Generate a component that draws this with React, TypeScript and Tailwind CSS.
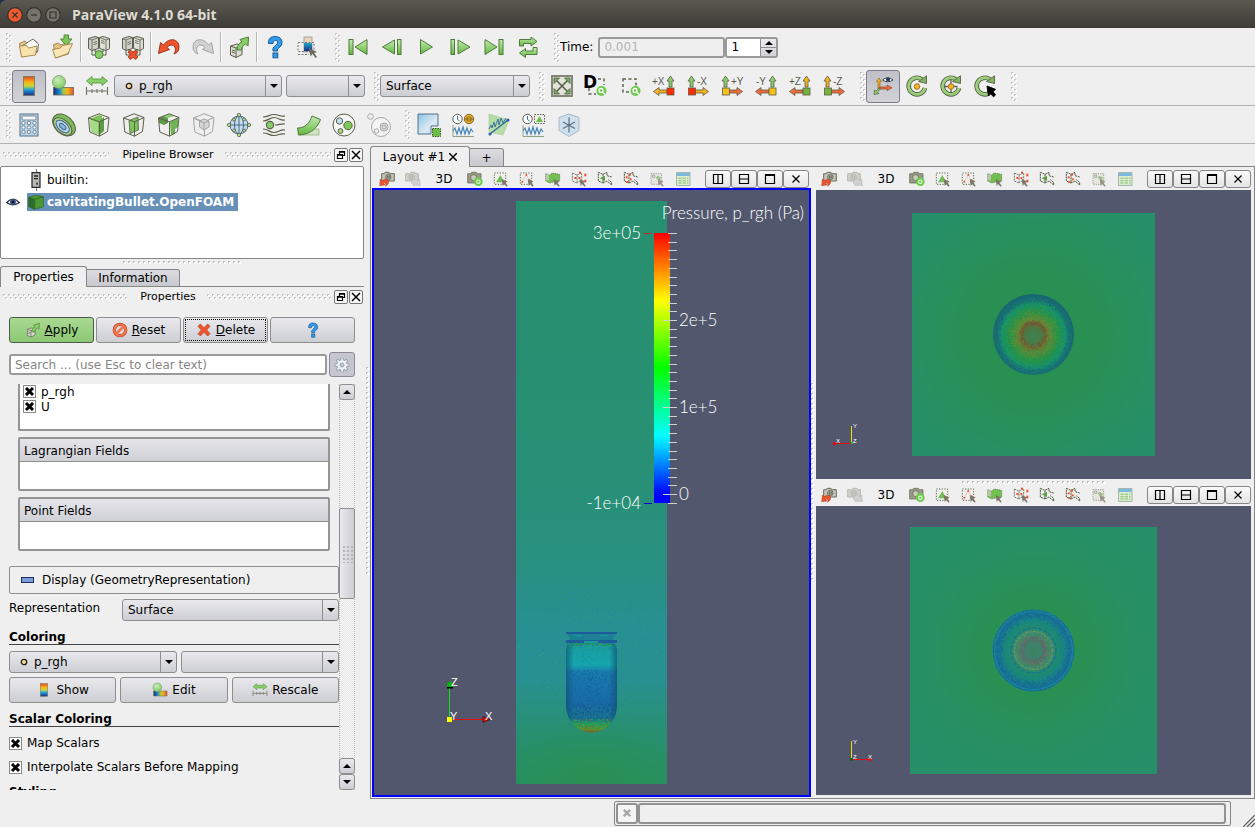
import { ReactNode, useState } from "react";
import clsx from "clsx";

type Dot = { x: number; y: number; fill: string };

const OUT = "#5c5e48";
const GRN = "#86cf6a";
const RED = "#f0522c";
const GRY = "#9c9c9c";

/* ---------- icons ---------- */

const cubeWire = (
    <g fill="none" stroke={OUT} strokeWidth="1">
        <path d="M12 .8 22 4.5 20.5 18.5 12.5 23.2 2.8 19 1.5 5z" />
        <path d="M1.5 5 12.5 8.8 22 4.5M12.5 8.8V23.2" />
    </g>
);

const racks = (
    <g>
        <path d="M1.5 3.500 8 1.500l3.500 1v11L5 15.500l-3.500-2z" fill="#d0d0ca" stroke={OUT} />
        <path d="M1.500 3.500 5 5v10.500M5 5l6.500-2.500M6.500 7.500l3.500-1M6.500 9.500l3.500-1" fill="none" stroke={OUT} strokeWidth=".8" />
        <path d="M12.500 2.500 16 1.500l6.500 2v10L19 15.500l-6.500-2z" fill="#dededa" stroke={OUT} />
        <path d="M12.500 2.500 19 5v10.500M19 5l3.500-1.500M14 5.500l3.500 1M14 7.500l3.500 1" fill="none" stroke={OUT} strokeWidth=".8" />
        <path d="M5 16v4h5M19 16v4h-5M8 14v3h8v-3" fill="none" stroke={OUT} />
    </g>
);

const camUp = (x: number, fill: string) => (
    <path d={`M${x} 13V7h-2L${x + 1.5} 2 ${x + 5} 7H${x + 3}v6z`} fill={fill} stroke={OUT} strokeWidth=".8" />
);
const camLeft = (fill: string) => (
    <path d="M15 16H7v-2.500L1.500 17.500 7 21.500V19h8z" fill={fill} stroke={OUT} strokeWidth=".8" />
);
const camRight = (fill: string) => (
    <path d="M9 16h8v-2.500l5.500 4-5.500 4V19H9z" fill={fill} stroke={OUT} strokeWidth=".8" />
);
const camText = (x: number, label: string) => (
    <text x={x} y="11" fontSize="10" fontFamily="'Liberation Sans', sans-serif" fill="#5a5a50">{label}</text>
);
const square = (x: number, fill: string) => (
    <rect x={x} y="14" width="7" height="7" fill={fill} stroke={OUT} strokeWidth=".8" />
);

const rotateArc = (
    <g>
        <path d="M17 5.500A8.300 8.300 0 1 0 20 14" fill="none" stroke={OUT} strokeWidth="4.600" />
        <path d="M17 5.500A8.300 8.300 0 1 0 20 14" fill="none" stroke="#9ad07c" strokeWidth="2.800" />
        <path d="M13.500 7.500 21.500 9.500V1.800z" fill="#7cb860" stroke={OUT} strokeWidth=".9" />
    </g>
);

const wave = <path d="M1 18l2-3 2 6 2-6 2 6 2-7 2 7 2-6 2 6 2-5 2 3" fill="none" stroke="#4386b6" strokeWidth="1.200" />;
const waveAxis = <path d="M1 12v11.500h21" fill="none" stroke="#90a080" />;
const clock = (
    <g fill="#fafafa" stroke={OUT}>
        <circle cx="5.500" cy="6" r="4.700" />
        <path d="M5.500 3v3.500l2 1.500" fill="none" stroke="#3a6ea0" />
    </g>
);
const lens = (
    <g>
        <circle cx="17.500" cy="17" r="5" fill="#6cc94c" />
        <circle cx="17" cy="16.500" r="2" fill="none" stroke="#fff" strokeWidth="1.300" />
        <path d="M18.500 18l2.500 2.500" stroke="#fff" strokeWidth="1.300" />
    </g>
);

const marquee = <rect x="2" y="3" width="17" height="17" fill="none" stroke="#5b6b45" strokeDasharray="2 2" strokeWidth="1.400" />;
const cursor = <path d="M13 12l9 4-3.500 1.500L22 22l-1.500 1.500-4-4-2 3z" fill="#7b7668" />;
const bentMesh = <path d="M2 2l7 3v13l-7-3zM9 5l6-3v5l7 2M9 18l6-3 7 6v-4l-5-4" fill="none" stroke="#4d5a3d" strokeDasharray="3 1" strokeWidth="1.500" />;

const camera = (color: string) => (
    <g fill="none" stroke={color} strokeWidth="1.500">
        <path d="M4 4h4l1-2h6l1 2h7v11H4z" fill="#c4c4b8" />
        <circle cx="14" cy="9" r="4" />
        <rect x="12.500" y="7.500" width="3" height="3" />
    </g>
);

const ICONS: Record<string, ReactNode> = {
    open: (
        <g stroke="#a08048" strokeWidth=".9">
            <path d="M2.500 8.500 8 6l2 2.500L19 6l.5 2v10L5 22z" fill="#e6c98a" />
            <path d="M5 11 16 4l5.500 5-1 8z" fill="#fdfdfb" stroke={OUT} />
            <path d="M2.500 11l7-.5 2 2.500 8.500-2-1.500 9L4.500 22z" fill="#f8e2ab" />
        </g>
    ),
    save: (
        <g strokeWidth=".9">
            <path d="M2.500 9.500l5-1.500 2 2 8-3 1 3-1 9L4.500 23z" fill="#e2c384" stroke="#a08048" />
            <path d="M13 0h4.500v4h3.500l-5.700 6.500L9.500 4H13z" fill="#7cc858" stroke="#4d7a34" />
            <path d="M1.500 14.500l8-1.500 2-2.500 10-2-4.500 10L4.500 23z" fill="#fae6b4" stroke="#a08048" />
        </g>
    ),
    connect: <g>{racks}<circle cx="12" cy="19.500" r="4" fill={GRN} stroke="#4d7a34" /></g>,
    disconnect: <g>{racks}<path d="M8 16l8 7.500M16 16l-8 7.500" stroke="#a03418" strokeWidth="4" /><path d="M8.500 16.500l7 6.500M15.500 16.500l-7 6.500" stroke={RED} strokeWidth="2.400" /></g>,
    undo: <path d="M1.500 18.500 3.500 7.500l3 2.500C12 2 22 3.500 22 12c0 4-2 6-5 7 2.500-4 1.500-8.500-2-9-2.500 0-4 1-5 2.500l2.500 2z" fill={RED} stroke="#8c3018" strokeWidth=".9" />,
    redo: <path d="M22.500 18.500 20.500 7.500l-3 2.500C12 2 2 3.500 2 12c0 4 2 6 5 7-2.500-4-1.500-8.500 2-9 2.500 0 4 1 5 2.500l-2.500 2z" fill="#d2d2d2" stroke={GRY} strokeWidth=".9" />,
    extract: (
        <g strokeWidth="1">
            <path d="M3.500 11 10 9l5 1.500v9L9 22.500l-5.500-2.500z" fill="#dcdcd6" stroke={OUT} />
            <path d="M3.500 11 9 13l6-2.500M9 13v9.500M5 15l3 1M5 17l3 1" fill="none" stroke={OUT} />
            <path d="M10 15c0-4 2-7 5-8l-2-2.500L21.500 2 21 11l-2.500-2c-2.500 1.500-4 3.500-4 6z" fill={GRN} stroke="#4d7a34" />
        </g>
    ),
    help: (
        <g fill="#2f9be8" stroke="#1c5a94" strokeWidth="1">
            <path d="M5.500 8.500C5 3.500 8 1.500 12 1.500s7 2 7 6-3 5-4.500 6.500V16h-4.500v-3c1.500-2.500 4.500-3 4.500-5.500 0-3-4.500-3-4.500 1z" />
            <rect x="10" y="18" width="4.800" height="4.800" />
        </g>
    ),
    colormapPick: (
        <g>
            <rect x="7" y="2" width="8" height="15" fill="url(#rain-soft)" stroke="#999" strokeWidth=".8" />
            <rect x="7" y="8" width="8" height="8" fill="url(#rain-blue)" />
            <path d="M1 7.500h16v9H1zM1 19.500h11" fill="none" stroke="#777" strokeDasharray="2 1.500" />
            <path d="M12 13l8 4-3 1 3 4-1.500 1-3-4-2 2.500z" fill="#6a6a60" />
        </g>
    ),
    first: <g fill="url(#leaf)" stroke="#4f7a3c"><rect x="3" y="4.500" width="4" height="15" /><path d="M21 4.500v15L9 12z" /></g>,
    prev: <g fill="url(#leaf)" stroke="#4f7a3c"><rect x="17.500" y="4.500" width="3.500" height="15" /><path d="M14.500 5v14L2.500 12z" /></g>,
    play: <path d="M6.500 4.500v14.500L18.500 12z" fill="url(#leaf)" stroke="#4f7a3c" />,
    next: <g fill="url(#leaf)" stroke="#4f7a3c"><rect x="3" y="4.500" width="3.500" height="15" /><path d="M10 5v14l12-7z" /></g>,
    last: <g fill="url(#leaf)" stroke="#4f7a3c"><rect x="17" y="4.500" width="4" height="15" /><path d="M3 4.500v15L15 12z" /></g>,
    loop: (
        <g fill="url(#leaf)" stroke="#4f7a3c">
            <path d="M3.500 11V4.500H15V2l6 4.500-6 4.500V8.500H7.500V11z" />
            <path d="M21 12.500V19.500H9.500V22.500l-6-4.500 6-4.500v2.500H17v-3.500z" />
        </g>
    ),
    colorbar: <rect x="6.500" y="2.500" width="11" height="19" fill="url(#rain-v)" stroke="#775" strokeWidth=".8" />,
    colorEdit: (
        <g>
            <rect x="2.500" y="13.500" width="20" height="7.500" fill="url(#rain-h)" stroke="#665" strokeWidth=".8" />
            <circle cx="8" cy="8" r="6.500" fill="url(#ball)" stroke="#7a9a6c" strokeWidth=".8" />
        </g>
    ),
    rescale: (
        <g>
            <path d="M1.500 7 7 2.500V5h10V2.500L22.500 7 17 11.500V9H7v2.500z" fill={GRN} stroke="#5a9a44" strokeWidth=".9" />
            <path d="M1.500 13v8M22.500 13v8M1.500 17h21M7 15v4M12 15v4M17 15v4" fill="none" stroke="#77776c" strokeWidth="1.200" />
        </g>
    ),
    resetCam: (
        <g>
            <rect x="2" y="2" width="20" height="20" fill="#e2e4da" stroke="#84867a" strokeWidth="2" />
            <path d="M6 6l12 12M18 6 6 18" stroke="#56604a" strokeWidth="1.600" />
            <path d="M4 4h5.500L4 9.500zM20 4v5.500L14.500 4zM4 20v-5.500L9.500 20zM20 20h-5.500l5.500-5.500z" fill="#7cac60" stroke="#4c5a3c" strokeWidth=".8" />
        </g>
    ),
    zoomD: (
        <g>
            <path d="M14 5h6v6M5 14v6h7" fill="none" stroke="#62624e" strokeWidth="1.500" strokeDasharray="3 2.500" />
            {lens}
            <text x="-1" y="14" fontSize="17" fontWeight="700" fontFamily="'DejaVu Sans', sans-serif" fill="#000">D</text>
        </g>
    ),
    zoomBox: <g><path d="M5 5h13v13H5z" fill="none" stroke="#62624e" strokeWidth="1.500" strokeDasharray="3 2.500" />{lens}</g>,
    plusX: <g>{camText(0, "+X")}{camUp(17, GRN)}{camLeft("#f6b21c")}{square(15, "#ff2a00")}</g>,
    minusX: <g>{camText(11, "-X")}{camUp(4, GRN)}{camRight("#f6b21c")}{square(2.5, "#ff2a00")}</g>,
    plusY: <g>{camText(11, "+Y")}{camUp(4, GRN)}{camRight("#f26a3c")}{square(2.5, "#f8c01c")}</g>,
    minusY: <g>{camText(2, "-Y")}{camUp(17, GRN)}{camLeft("#f26a3c")}{square(15, "#f8c01c")}</g>,
    plusZ: <g>{camText(1, "+Z")}{camUp(17, "#f6b21c")}{camLeft("#f26a3c")}{square(15, "#74b43c")}</g>,
    minusZ: <g>{camText(11, "-Z")}{camUp(4, "#f6b21c")}{camRight("#f26a3c")}{square(2.5, "#74b43c")}</g>,
    axesEye: (
        <g>
            <path d="M7 15V7.500H5.500L8 4l2.500 3.500H9V15z" fill="#f2b020" stroke="#8a6a30" strokeWidth=".7" />
            <path d="M8 13h8v-2l5 2.800-5 2.800V15H8z" fill="#f26a3c" stroke="#8a4a30" strokeWidth=".7" />
            <path d="M8 14l-3 3-1.500-1L3 20.500l5-.8L6.500 18 9.500 15z" fill={GRN} stroke={OUT} strokeWidth=".7" />
            <path d="M11.500 6Q16.500 1.500 22 6 16.500 9.500 11.500 6z" fill="#fff" stroke="#333" strokeWidth=".9" /><circle cx="17" cy="5.500" r="2" fill="#1c3468" />
        </g>
    ),
    rotate: <g>{rotateArc}<circle cx="12" cy="12.500" r="2.800" fill="#f6b21c" stroke="#9a7a30" /></g>,
    rotateCross: <g>{rotateArc}<path d="M12 6v13M5.500 12.500h13" stroke={OUT} strokeWidth="1.300" /><circle cx="12" cy="12.500" r="2.800" fill="#f6b21c" stroke="#9a7a30" /></g>,
    rotatePick: <g>{rotateArc}<path d="M14 12l8.500 3.500-3 1.500 3 4-2 1.800-3.500-3.800-1.500 3z" fill="#000" stroke="#000" /></g>,
    calculator: (
        <g>
            <rect x="3" y="1" width="18" height="22" fill="#bcd6ea" stroke="#5b7186" />
            <rect x="5" y="3" width="14" height="4" rx="1" fill="#f4f8fa" stroke="#5b7186" strokeWidth=".8" />
            <g fill="#f4f8fa" stroke="#5b7186" strokeWidth=".8">
                {[10, 14.5, 19].map((y) => [6.5, 12, 17.5].map((x) => <circle key={`${x}-${y}`} cx={x} cy={y} r="1.700" />))}
            </g>
        </g>
    ),
    contour: (
        <g transform="rotate(42 12 12)">
            <ellipse cx="12" cy="12" rx="13" ry="9" fill="#79bf5c" stroke={OUT} />
            <ellipse cx="12" cy="14" rx="11" ry="6.500" fill="#a8d48c" stroke={OUT} />
            <ellipse cx="12" cy="14" rx="8" ry="4.500" fill="#b8d4e6" stroke="#3e6488" />
            <ellipse cx="12" cy="14" rx="4" ry="2" fill="#8cb6d4" stroke="#3e6488" />
        </g>
    ),
    clip: (
        <g>
            <path d="M3 6l9-4 3 1v5l-2 14-9-3.500z" fill="#7cc458" />
            <path d="M3 6l8 3.500v12L4 18.500z" fill="#a4dc86" />
            <path d="M12 9l5-5v14l-4.500 4z" fill="#5c9a44" />
            {cubeWire}
        </g>
    ),
    slice: <g><path d="M7 7.500l9-3.500.5 13L8 20.500z" fill="#7cc45c" stroke={OUT} strokeWidth=".8" />{cubeWire}</g>,
    threshold: (
        <g>
            <path d="M2 5l5-2 4 2v5l-4 2-5-2z" fill="#5f9a48" /><path d="M13 9l8-4v9l-3 2v5l-4 1z" fill="#6fb454" />
            <path d="M7 3l6-2 4 2-6 2z" fill="#8cd06c" />
            {cubeWire}
        </g>
    ),
    subset: (
        <g fill="none" stroke="#a4a4a4">
            <path d="M12 .8 22 4.500 20.500 18.500 12.500 23.200 2.800 19 1.500 5zM1.500 5 12.500 8.800 22 4.500M12.500 16v7M1.500 5l6 3" />
            <path d="M7.500 8 12 6l5 2v6l-5 3-4.500-3z" fill="#d4d4d4" /><path d="M7.500 8l4.500 2 5-2M12 10v7" />
        </g>
    ),
    glyph: (
        <g>
            <circle cx="12" cy="12" r="9" fill="#c2dcee" stroke="#4d6a80" />
            <path d="M3 12h18M12 3v18" stroke="#4d6a80" /><ellipse cx="12" cy="12" rx="4.500" ry="9" fill="none" stroke="#4d6a80" />
            <g fill="#b6dc9c" stroke={OUT} strokeWidth=".8">
                <circle cx="12" cy="2" r="1.700" /><circle cx="12" cy="22" r="1.700" /><circle cx="2" cy="12" r="1.700" /><circle cx="22" cy="12" r="1.700" />
                <circle cx="7" cy="6.500" r="1.500" /><circle cx="17" cy="6.500" r="1.500" /><circle cx="7" cy="17.500" r="1.500" /><circle cx="17" cy="17.500" r="1.500" />
            </g>
        </g>
    ),
    stream: (
        <g fill="none" stroke={OUT} strokeWidth="1.200">
            <path d="M1 4c6 0 6-2.500 11-2.500S18 4 23 3M1 8c6 0 6-3.500 11-3.500S18 8 23 7M1 20c6 0 6 2.500 11 2.500S18 20 23 21M1 16c6 0 6 3.500 11 3.500S18 16 23 17M13 12c4 0 6-1.500 10-1" />
            <circle cx="8" cy="12" r="3.600" fill={GRN} />
        </g>
    ),
    warp: (
        <g>
            <path d="M1 16h21v6H1z" fill="#cfe2c0" stroke="#9ab488" strokeWidth=".8" />
            <path d="M.5 15c8 0 12-5 14.500-12l8.500 3.500C21 14 14 21.500 2 22z" fill="url(#leaf)" stroke="#4f7a3c" />
        </g>
    ),
    group: (
        <g stroke={OUT}>
            <circle cx="12" cy="12" r="11" fill="#f6f6f4" /><circle cx="7.500" cy="8" r="3.200" fill="#c0dcf0" /><circle cx="16" cy="12.500" r="4.200" fill="#7cc858" /><circle cx="8.500" cy="18" r="2.400" fill="#a8dc88" />
        </g>
    ),
    extractLevel: (
        <g stroke="#a8a8a8" fill="none">
            <circle cx="14" cy="14" r="9.500" fill="#f4f4f4" /><circle cx="3.500" cy="3.500" r="2.800" /><circle cx="17" cy="14" r="4" fill="#dcdcdc" /><circle cx="17" cy="14" r="2" /><circle cx="9.500" cy="18" r="2.200" />
        </g>
    ),
    selectBox: (
        <g>
            <path d="M1 1h20v12h-7v8H1z" fill="url(#sky)" stroke="#54728c" />
            <rect x="15.500" y="15.500" width="8" height="8" fill="#6ebc48" stroke="#3e5c2c" strokeDasharray="1.500 1" />
        </g>
    ),
    plotGlobal: <g>{waveAxis}{wave}{clock}<circle cx="17" cy="6" r="4.700" fill="#f4b41c" stroke="#7a6430" /><path d="M15 4h4v4h-4zM13 6h8" fill="none" stroke="#7a6430" strokeWidth=".9" /></g>,
    plotLine: (
        <g>
            <path d="M2 1l20 6-6 15-14-3z" fill="#b4dca4" stroke="#a8c89c" strokeWidth=".6" />
            <path d="M2 16l2-4 1 3 2-6 1 5 3-8 1 6 2-7 2 5 3-5" fill="none" stroke="#3a76a6" strokeWidth="1" />
            <path d="M3 21 21 7" stroke="#2c64a0" strokeWidth="1.200" /><circle cx="3" cy="21" r="1.600" fill="#2c64a0" /><circle cx="21" cy="7" r="1.600" fill="#2c64a0" />
        </g>
    ),
    plotSel: <g>{waveAxis}{wave}{clock}<rect x="12.500" y="1.500" width="10" height="9" fill="none" stroke={OUT} strokeDasharray="1.500 1.200" /><path d="M14 9l3.500-6L21 9z" fill="#6ebc48" /></g>,
    probe: (
        <g>
            <path d="M12 1l10 3.500v13L12 23.500 2 17.500v-13z" fill="#cfe0ec" stroke="#a6bac8" />
            <path d="M12 4.500v15M6 9l12 6.500M18 9 6 15.500" stroke="#5c7080" strokeWidth="1.200" />
        </g>
    ),
    camUndo: <g>{camera("#6c6c5c")}<path d="M1 22l1-10 3 3C8 10 16 12 14 19l-4 4c1-4-1-6-3-5L9 21z" fill={RED} stroke="#8c3018" strokeWidth=".6" /></g>,
    camRedo: <g opacity=".7" transform="matrix(-1 0 0 1 24 0)">{camera("#a0a0a0")}<path d="M1 22l1-10 3 3C8 10 16 12 14 19l-4 4c1-4-1-6-3-5L9 21z" fill="#c6c6c6" stroke="#999" strokeWidth=".8" /></g>,
    camAdjust: <g><path d="M1 4h5l1-2h7l1 2h6v14H1z" fill="#9a9a88" stroke={OUT} /><circle cx="10" cy="10" r="4.500" fill="#c8ccb8" stroke={OUT} /><circle cx="17" cy="16" r="6.500" fill="#6ecb50" /><circle cx="17" cy="16" r="2.600" fill="none" stroke="#e4f8dc" strokeWidth="1.600" /></g>,
    selCells: <g>{marquee}<path d="M4.500 17 11 6l6 11z" fill="#74bc54" />{cursor}</g>,
    selPoints: <g>{marquee}<path d="M4.500 16 11 6l6 10" fill="none" stroke="#d8b8a0" /><g fill={RED}><circle cx="5" cy="16" r="1.500" /><circle cx="11" cy="6" r="1.500" /><circle cx="16" cy="14" r="1.500" /></g>{cursor}</g>,
    frusCells: <g><path d="M1 4l6 2 4-3 11 2v10l-11 2-4 1-6-3z" fill="#72c050" stroke="#5b6b45" strokeDasharray="2 1" /><path d="M1 5h5v9H1z" fill="#bcc4ae" />{cursor}</g>,
    frusPoints: <g><path d="M2 3l7 3v12l-7-3zM9 6l7-3v10l-7 5" fill="none" stroke="#77776a" strokeDasharray="3 1" strokeWidth="1.400" /><g fill={RED}><rect x="5" y="9" width="3" height="3" /><rect x="11" y="9" width="3" height="3" /><rect x="20" y="4" width="3" height="4" /><rect x="20" y="13" width="3" height="4" /><rect x="12" y="1" width="3" height="3" /></g>{cursor}</g>,
    polyCells: <g>{bentMesh}<path d="M4 11l8-4v8z" fill="#5f9c48" /></g>,
    polyPoints: <g>{bentMesh}<g fill={RED}><rect x="4" y="8" width="3" height="3" /><rect x="9" y="4" width="3" height="3" /><rect x="10" y="11" width="3" height="3" /><rect x="5" y="15" width="3" height="3" /></g></g>,
    selBlock: <g opacity=".75"><rect x="3" y="4" width="16" height="16" fill="#e2e4dc" stroke={OUT} strokeDasharray="2 1.500" /><circle cx="7" cy="8" r="2" fill="none" stroke={OUT} /><path d="M10 10l3-3 5 3-2 5z" fill="#7eb464" />{cursor}</g>,
    sheet: <g><rect x="2.500" y="2.500" width="20" height="19" fill="#dcecd0" stroke="#7f9c8c" /><path d="M3 3h19v4.500H3z" fill="#7cb8e0" /><path d="M5 11h15M5 14.500h15M5 18h15" stroke="#86c070" strokeWidth="1.600" strokeDasharray="5 1.500" /></g>,
    reset: <g><circle cx="12" cy="12" r="8.500" fill="#dcdce0" stroke="#b43c20" strokeWidth="5" /><circle cx="12" cy="12" r="8.500" fill="none" stroke="#f4744c" strokeWidth="3.500" /><path d="M6 18 18 6" stroke="#f4744c" strokeWidth="4" /></g>,
    remove: <path d="M6.500 3 12 8.500 17.500 3 21 6.500 16 12l5 5.500-3.500 3.500L12 15.500 6.500 21 3 17.500 8 12 3 6.500z" fill={RED} stroke="#b03a20" />,
    gear: (
        <g>
            <g stroke="#8a98a6" strokeWidth="4.500"><path d="M12 1v22M1 12h22M4.200 4.200l15.600 15.600M19.800 4.200 4.200 19.800" /></g>
            <circle cx="12" cy="12" r="8" fill="#eef2f6" stroke="#8a98a6" strokeWidth="1.500" />
            <g stroke="#eef2f6" strokeWidth="2.500"><path d="M12 2v20M2 12h20M5 5l14 14M19 5 5 19" /></g>
            <circle cx="12" cy="12" r="3.200" fill="#c4c6cc" stroke="#8a98a6" />
        </g>
    ),
    eye: <g><path d="M1 13Q12 1 23 13 12 21 1 13z" fill="#e6e8ee" stroke="#1c2434" strokeWidth="2" /><circle cx="12" cy="12" r="5" fill="#3c5484" /><circle cx="12" cy="12" r="2.300" fill="#0c1020" /></g>,
    server: <g><rect x="6" y="1" width="12" height="22" fill="#b8b8b8" stroke="#222" strokeWidth="1.800" /><path d="M9 6h6M9 10h6" stroke="#222" strokeWidth="2" /><rect x="12" y="16" width="3" height="3" fill="#444" /></g>,
    cube: <g><path d="M1 5l10-3 12 2v15l-13 4-9-4z" fill="#4a9a34" stroke="#2c5c24" /><path d="M1 5l9 3 13-4M10 8v15" stroke="#24501c" fill="none" /><path d="M1 5l9 3v15l-9-4z" fill="#2f6c2c" /></g>,
};

const Icon = ({ name, className = "size-6" }: { name: string; className?: string }) => (
    <svg viewBox="0 0 24 24" className={clsx("shrink-0 overflow-visible", className)} aria-hidden="true">{ICONS[name]}</svg>
);

const Gradients = () => (
    <svg className="absolute size-0" aria-hidden="true">
        <defs>
            <linearGradient id="leaf" x1="0" y1="0" x2="0" y2="1"><stop offset="0" stopColor="#c4ecb0" /><stop offset="1" stopColor="#62b840" /></linearGradient>
            <linearGradient id="sky" x1="0" y1="0" x2="1" y2="1"><stop offset="0" stopColor="#8cc0e4" /><stop offset=".6" stopColor="#dceaf4" /><stop offset="1" stopColor="#a8cce8" /></linearGradient>
            <linearGradient id="rain-v" x1="0" y1="0" x2="0" y2="1"><stop offset="0" stopColor="#e4482c" /><stop offset=".3" stopColor="#f8b414" /><stop offset=".5" stopColor="#c8d83c" /><stop offset=".7" stopColor="#1c9cdc" /><stop offset="1" stopColor="#1c2c84" /></linearGradient>
            <linearGradient id="rain-h"><stop offset="0" stopColor="#1c2c74" /><stop offset=".3" stopColor="#1c88d0" /><stop offset=".5" stopColor="#9cc850" /><stop offset=".7" stopColor="#f8b414" /><stop offset="1" stopColor="#e8502c" /></linearGradient>
            <linearGradient id="rain-soft" x1="0" y1="0" x2="0" y2="1"><stop offset="0" stopColor="#e8d0c0" /><stop offset="1" stopColor="#e0e4c0" /></linearGradient>
            <linearGradient id="rain-blue" x1="0" y1="0" x2="0" y2="1"><stop offset="0" stopColor="#20a8c8" /><stop offset="1" stopColor="#182c88" /></linearGradient>
            <radialGradient id="ball" cx=".4" cy=".35" r=".7"><stop offset="0" stopColor="#c8ecb8" /><stop offset="1" stopColor="#7cc860" /></radialGradient>
        </defs>
    </svg>
);

/* ---------- small widgets ---------- */

const FACE = "border border-[#8e8e8e] rounded-[3px] bg-linear-to-b from-[#e9e9ed] to-[#cdced4]";

const GripV = ({ className }: { className?: string }) => (
    <svg className={clsx("w-[7px] shrink-0", className)} aria-hidden="true">
        <defs>
            <pattern id="grip-v" width="7" height="5" patternUnits="userSpaceOnUse">
                <rect x="1" y="0" width="2" height="2" fill="#c4c4c4" /><rect x="2" y="1" width="2" height="2" fill="#fff" />
                <rect x="4" y="2" width="2" height="2" fill="#c4c4c4" /><rect x="5" y="3" width="2" height="2" fill="#fff" />
            </pattern>
        </defs>
        <rect width="7" height="100%" fill="url(#grip-v)" />
    </svg>
);

const GripH = ({ className }: { className?: string }) => (
    <svg className={clsx("h-[6px] min-w-0", className)} aria-hidden="true">
        <defs>
            <pattern id="grip-h" width="5" height="6" patternUnits="userSpaceOnUse">
                <rect x="0" y="0" width="2" height="2" fill="#c4c4c4" /><rect x="1" y="1" width="2" height="2" fill="#fff" />
                <rect x="2" y="3" width="2" height="2" fill="#c4c4c4" /><rect x="3" y="4" width="2" height="2" fill="#fff" />
            </pattern>
        </defs>
        <rect width="100%" height="6" fill="url(#grip-h)" />
    </svg>
);

// single row of dots, used on the splitters
const SplitDots = ({ vertical, className }: { vertical?: boolean; className?: string }) => (
    <svg className={clsx("shrink-0", vertical ? "w-[3px]" : "h-[3px]", className)} aria-hidden="true">
        <defs>
            <pattern id="split-dots" width="5" height="5" patternUnits="userSpaceOnUse">
                <rect width="2" height="2" fill="#bcbcbc" /><rect x="1" y="1" width="2" height="2" fill="#fff" />
            </pattern>
        </defs>
        <rect width="100%" height="100%" fill="url(#split-dots)" />
    </svg>
);

const Tool = ({ name, active, wide }: { name: string; active?: boolean; wide?: boolean }) => (
    <button
        type="button"
        aria-label={name}
        className={clsx(
            "flex h-[33px] shrink-0 items-center justify-center rounded-[3px]",
            wide ? "w-[35px]" : "w-[34px]",
            active && "border border-[#7d7d86] bg-linear-to-b from-[#bfc0c8] to-[#d2d2d8]"
        )}
    >
        <Icon name={name} />
    </button>
);

const Sep = () => <div className="h-[30px] w-[2px] shrink-0 border-l border-[#b4b4b4] bg-white" />;

const Arrow = ({ up }: { up?: boolean }) => (
    <svg viewBox="0 0 8 4" className="h-1 w-2" aria-hidden="true"><path d={up ? "M0 4h8L4 0z" : "M0 0h8L4 4z"} /></svg>
);

type ComboProps = { label: string; id?: string; options: string[]; dot?: boolean; className?: string };

const Combo = ({ label, id, options, dot, className }: ComboProps) => (
    <div className={clsx("relative h-[22px] shrink-0", FACE, className)}>
        <select id={id} aria-label={label} className={clsx("size-full appearance-none bg-transparent pr-5 outline-none", dot ? "pl-6" : "pl-[5px]")}>
            {options.map((o) => <option key={o}>{o}</option>)}
        </select>
        {dot && (
            <svg viewBox="0 0 8 8" className="pointer-events-none absolute top-1.5 left-[10px] size-2" aria-hidden="true">
                <circle cx="4" cy="4" r="2.700" fill="#fcd8a0" stroke="#221c10" strokeWidth="1.300" />
            </svg>
        )}
        <span className="pointer-events-none absolute inset-y-0 right-0 flex w-4 items-center justify-center border-l border-[#8e8e8e]"><Arrow /></span>
    </div>
);

const Check = ({ label, className }: { label: string; className?: string }) => {
    const [on, setOn] = useState(true);
    return (
        <label className={clsx("flex items-center gap-[5px]", className)}>
            <span className="relative size-[13px] shrink-0">
                <input type="checkbox" checked={on} onChange={(e) => setOn(e.target.checked)} className="block size-[13px] appearance-none border border-[#8a8a8a] bg-white" />
                {on && (
                    <svg viewBox="0 0 13 13" className="pointer-events-none absolute inset-0" aria-hidden="true">
                        <path d="M3 3l7 7M10 3l-7 7" stroke="#000" strokeWidth="3" />
                    </svg>
                )}
            </span>
            {label}
        </label>
    );
};

const DockTitle = ({ title, className }: { title: string; className?: string }) => (
    <div className={clsx("flex shrink-0 items-center pl-[3px]", className)}>
        <GripH className="flex-1" />
        <h2 className="pr-[11px] pl-[13px] text-[11px]">{title}</h2>
        <GripH className="mr-[3px] flex-1" />
        <button type="button" aria-label="Float" className="mr-px flex size-[14px] items-center justify-center rounded-[2px] border border-[#777] bg-[#f6f6f6]">
            <svg viewBox="0 0 10 10" className="size-[10px]" fill="#f6f6f6" stroke="#000" strokeWidth="1.200"><path d="M3.500 1.500h5v4h-5z" /><path d="M1.500 4.500h5v4h-5zM1.500 5.200h5M3.500 2.200h5" /></svg>
        </button>
        <button type="button" aria-label="Close" className="mr-px flex size-[14px] items-center justify-center rounded-[2px] border border-[#777] bg-[#f6f6f6]">
            <svg viewBox="0 0 10 10" className="size-[10px]" stroke="#000" strokeWidth="1.500"><path d="M1 1l8 8M9 1 1 9" /></svg>
        </button>
    </div>
);

const Push = ({ icon, children, className }: { icon: string; children?: ReactNode; className?: string }) => (
    <button type="button" aria-label={children ? undefined : icon} className={clsx("flex h-[26px] flex-1 items-center justify-center gap-1", className ?? FACE)}>
        <Icon name={icon} className="size-4" />
        {children}
    </button>
);

const FieldBox = ({ title }: { title: string }) => (
    <div className="mt-1.5 h-[54px] rounded-[2px] border-2 border-[#949494] bg-white">
        <div className="flex h-[23px] items-center border-b border-[#8e8e8e] bg-linear-to-b from-[#e4e4e9] to-[#d0d1d7] pt-px pl-1">{title}</div>
    </div>
);

const Section = ({ title, className }: { title: string; className?: string }) => (
    <h3 className={clsx("h-[17px] border-b border-[#444] leading-[18px] font-bold", className)}>{title}</h3>
);

/* ---------- toolbars ---------- */

const Toolbars = () => (
    <div className="shrink-0">
        <div className="flex h-[39px] items-center border-b border-[#b2b2b2] pl-[5px]">
            <GripV className="h-[29px]" />
            <Tool name="open" /><Tool name="save" /><Sep />
            <Tool name="connect" /><Tool name="disconnect" /><Sep />
            <Tool name="undo" /><Tool name="redo" /><Sep />
            <Tool name="extract" /><Sep />
            <Tool name="help" /><Tool name="colormapPick" />
            <GripV className="ml-2 h-[29px]" />
            {["first", "prev", "play", "next", "last", "loop"].map((n) => <Tool key={n} name={n} />)}
            <GripV className="ml-2 h-[29px]" />
            <label htmlFor="time" className="pr-[5px]">Time:</label>
            <input id="time" disabled value="0.001" className="h-[21px] w-[127px] rounded-[3px] border-2 border-[#9a9a9a] bg-[#efefef] px-1 text-[#b4b4b4]" />
            <div className="flex h-[21px] w-[53px] rounded-[3px] border-2 border-[#9a9a9a] bg-white">
                <input aria-label="Time step" defaultValue="1" className="w-0 flex-1 bg-transparent pl-1 outline-none" />
                <div className="flex w-4 flex-col border-l border-[#8e8e8e] bg-linear-to-b from-[#ececf0] to-[#d0d0d6]">
                    <button type="button" aria-label="Step up" className="flex flex-1 items-center justify-center border-b border-[#8e8e8e]"><Arrow up /></button>
                    <button type="button" aria-label="Step down" className="flex flex-1 items-center justify-center"><Arrow /></button>
                </div>
            </div>
        </div>
        <div className="flex h-[39px] items-center border-b border-[#b2b2b2] pl-[5px]">
            <GripV className="h-[29px]" />
            <Tool name="colorbar" active /><Tool name="colorEdit" /><Tool name="rescale" />
            <Combo label="Color by" options={["p_rgh", "U"]} dot className="w-[168px]" />
            <Combo label="Component" options={[""]} className="ml-1 w-[79px]" />
            <GripV className="ml-2 h-[29px]" />
            <Combo label="Representation" options={["Surface", "Wireframe"]} className="w-[150px]" />
            <GripV className="ml-2 h-[29px]" />
            {["resetCam", "zoomD", "zoomBox", "plusX", "minusX", "plusY", "minusY", "plusZ", "minusZ"].map((n) => <Tool key={n} name={n} />)}
            <GripV className="ml-2 h-[29px]" />
            <Tool name="axesEye" active /><Tool name="rotate" /><Tool name="rotateCross" /><Tool name="rotatePick" />
            <GripV className="ml-2 h-[29px]" />
        </div>
        <div className="flex h-[38px] items-center border-b border-[#b2b2b2] pl-[5px]">
            <GripV className="-mr-px h-[29px]" />
            {["calculator", "contour", "clip", "slice", "threshold", "subset", "glyph", "stream", "warp", "group", "extractLevel"].map((n) => <Tool key={n} name={n} wide />)}
            <GripV className="ml-2 h-[29px]" />
            {["selectBox", "plotGlobal", "plotLine", "plotSel", "probe"].map((n) => <Tool key={n} name={n} wide />)}
        </div>
    </div>
);

/* ---------- left dock ---------- */

const Pipeline = () => (
    <div className="h-[93px] shrink-0 rounded-[2px] border border-[#868686] bg-white pt-[2px]">
        <div className="relative flex h-[22px] items-center pl-[27px]">
            <span className="absolute top-0 left-[35px] h-[22px] w-px bg-[#777]" />
            <Icon name="server" className="relative size-4" />
            <span className="pl-[3px]">builtin:</span>
        </div>
        <div className="flex h-[22px] items-center pl-[5px]">
            <Icon name="eye" className="size-[14px]" />
            <div className="ml-[7px] flex h-[18px] items-center gap-[3px] bg-[#6690b8] pr-1 pl-px font-bold text-white">
                <Icon name="cube" className="size-4" />
                cavitatingBullet.OpenFOAM
            </div>
        </div>
    </div>
);

const Scrollbar = () => (
    <div className="flex w-4 shrink-0 flex-col border-x border-dotted border-[#bbb] bg-[repeating-conic-gradient(#e6e6e6_0_25%,#f8f8f8_0_50%)] bg-[length:2px_2px]">
        <button type="button" aria-label="Scroll up" className={clsx("-mx-px flex h-4 items-center justify-center", FACE)}><Arrow up /></button>
        <div className="flex-[109]" />
        <div className="-mx-px flex flex-[89] items-center justify-center rounded-[2px] border border-[#8e8e8e] bg-linear-to-r from-[#e9e9ed] to-[#cdced4]">
            <div className="h-[18px] w-[11px] bg-[radial-gradient(#b4b4ba_1px,transparent_1px)] bg-[length:4px_4px]" />
        </div>
        <div className="flex-[160]" />
        <button type="button" aria-label="Line up" className={clsx("-mx-px flex h-4 items-center justify-center", FACE)}><Arrow up /></button>
        <button type="button" aria-label="Line down" className={clsx("-mx-px flex h-4 items-center justify-center", FACE)}><Arrow /></button>
    </div>
);

const Properties = () => (
    <div className="flex min-h-0 flex-1 px-[9px]">
        <div className="min-w-0 flex-1 overflow-hidden">
            <div className="mx-[9px]">
                <div className="h-[47px] rounded-b-[2px] border-2 border-t-0 border-[#949494] bg-white pl-[3px]">
                    <Check label="p_rgh" className="h-[15px]" />
                    <Check label="U" className="h-[15px]" />
                </div>
                <FieldBox title="Lagrangian Fields" />
                <FieldBox title="Point Fields" />
            </div>
            <button type="button" className="mt-[15px] flex h-7 w-full items-center rounded-[2px] border border-[#8e8e8e] bg-[#efefef] pl-[11px]">
                <span className="mr-2 h-[6px] w-[13px] border border-[#1c2c5c] bg-[#7c9cdc]" />
                Display (GeometryRepresentation)
            </button>
            <div className="mt-[5px] flex">
                <label htmlFor="repr" className="w-[113px] leading-[18px]">Representation</label>
                <Combo id="repr" label="Display representation" options={["Surface", "Wireframe"]} className="flex-1" />
            </div>
            <Section title="Coloring" className="mt-[7px]" />
            <div className="mt-[6px] flex gap-1">
                <Combo label="Coloring array" options={["p_rgh", "U"]} dot className="w-[168px]" />
                <Combo label="Coloring component" options={[""]} className="flex-1" />
            </div>
            <div className="mt-1 flex gap-1">
                <Push icon="colorbar">Show</Push>
                <Push icon="colorEdit">Edit</Push>
                <Push icon="rescale">Rescale</Push>
            </div>
            <Section title="Scalar Coloring" className="mt-[7px]" />
            <Check label="Map Scalars" className="mt-1 h-6" />
            <Check label="Interpolate Scalars Before Mapping" className="h-6" />
            <Section title="Styling" className="mt-1" />
        </div>
        <Scrollbar />
    </div>
);

const LeftDock = () => (
    <aside className="flex w-[364px] shrink-0 flex-col pb-[9px]">
        <DockTitle title="Pipeline Browser" className="h-[22px]" />
        <Pipeline />
        <div className="flex h-[7px] shrink-0 items-center justify-center"><SplitDots className="w-[118px]" /></div>
        <div role="tablist" className="flex h-[21px] shrink-0 items-end">
            <button role="tab" aria-selected="true" className="h-[21px] w-[87px] rounded-t-[3px] border border-b-0 border-[#868686] bg-[#efefef]">Properties</button>
            <button role="tab" aria-selected="false" className="h-[18px] w-[93px] rounded-tr-[3px] border border-l-0 border-[#868686] bg-linear-to-b from-[#dcdce1] to-[#c8c9cf]">Information</button>
            <div className="flex-1 border-b border-[#868686]" />
        </div>
        <DockTitle title="Properties" className="h-5" />
        <div className="mt-[10px] flex gap-[2px] px-[9px]">
            <Push icon="extract" className="rounded-[3px] border border-[#4c5c48] bg-linear-to-b from-[#a9d992] to-[#8cc874]"><span><u>A</u>pply</span></Push>
            <Push icon="reset"><span><u>R</u>eset</span></Push>
            <Push icon="remove" className="rounded-[3px] border border-[#8e8e8e] bg-linear-to-b from-[#e9e9ed] to-[#cdced4] outline-1 -outline-offset-3 outline-dotted outline-black"><span><u>D</u>elete</span></Push>
            <Push icon="help" />
        </div>
        <div className="mt-[9px] mb-[7px] flex items-center gap-[2px] px-[9px]">
            <input aria-label="Search" placeholder="Search ... (use Esc to clear text)" className="h-[21px] min-w-0 flex-1 rounded-[3px] border-2 border-[#9a9a9a] bg-white px-1 outline-none placeholder:text-[#868686]" />
            <button type="button" aria-label="Advanced" className="flex h-[25px] w-[26px] items-center justify-center rounded-[3px] border border-[#8a8a92] bg-[#c6c7ce]"><Icon name="gear" className="size-4" /></button>
        </div>
        <Properties />
    </aside>
);

/* ---------- render views ---------- */

// small repeatable generator so the speckles stay put between renders
const rng = (seed: number) => () => {
    seed = (seed * 1664525 + 1013904223) % 4294967296;
    return seed / 4294967296;
};

const disc = (seed: number, n: number, cx: number, cy: number, r0: number, r1: number, fills: string[]): Dot[] => {
    const rand = rng(seed);
    return Array.from({ length: n }, () => {
        const a = rand() * Math.PI * 2;
        const r = r0 + (r1 - r0) * rand();
        return { x: Math.round(cx + Math.cos(a) * r), y: Math.round(cy + Math.sin(a) * r), fill: fills[Math.floor(rand() * fills.length)] };
    });
};

const grid = (seed: number, n: number, x: number, y: number, w: number, h: number, fills: string[]): Dot[] => {
    const rand = rng(seed);
    return Array.from({ length: n }, () => ({
        x: Math.floor(x + rand() * w),
        y: Math.floor(y + rand() * h),
        fill: fills[Math.floor(rand() * fills.length)],
    }));
};

const Dots = ({ dots, opacity = 1 }: { dots: Dot[]; opacity?: number }) => (
    <g opacity={opacity} shapeRendering="crispEdges">
        {dots.map((d, i) => <rect key={i} x={d.x} y={d.y} width="1" height="1" fill={d.fill} />)}
    </g>
);

const TICKS = Array.from({ length: 32 }, (_, i) => i - 1);

const VIEW_BTN = "flex h-[18px] w-[26px] items-center justify-center rounded-[3px] border border-[#868686] bg-linear-to-b from-[#fafafa] to-[#e4e4e6]";

const ViewFrame = ({ active, children }: { active?: boolean; children: ReactNode }) => (
    <section className="flex min-h-0 min-w-0 flex-1 flex-col">
        <div className="flex h-5 shrink-0 items-center px-[2px] pt-px">
            {["camUndo", "camRedo"].map((n) => <button key={n} type="button" aria-label={n} className="flex w-[26px] justify-center"><Icon name={n} className="size-4" /></button>)}
            <button type="button" className="w-9">3D</button>
            {["camAdjust", "selCells", "selPoints", "frusCells", "frusPoints", "polyCells", "polyPoints", "selBlock", "sheet"].map((n) => (
                <button key={n} type="button" aria-label={n} className="flex w-[26px] justify-center"><Icon name={n} className="size-4" /></button>
            ))}
            <div className="ml-auto flex">
                {["M1.500 1.500h9v9h-9zM6 1.500v9", "M1.500 1.500h9v9h-9zM1.500 6h9", "M1.500 1.500h9v9h-9zM1.500 2.500h9", "M2.500 2.500l7 7M9.500 2.500l-7 7"].map((d, i) => (
                    <button key={d} type="button" aria-label={["Split horizontal", "Split vertical", "Maximize", "Close view"][i]} className={VIEW_BTN}>
                        <svg viewBox="0 0 12 12" className="size-3" fill="none" stroke="#000" strokeWidth="1.200"><path d={d} /></svg>
                    </button>
                ))}
            </div>
        </div>
        <div className={clsx("min-h-0 flex-1 border-2", active ? "border-[#0000ff]" : "border-[#efefef]")}>
            <div className="size-full bg-[#52576e]">{children}</div>
        </div>
    </section>
);

const BulletView = () => (
    <svg viewBox="0 0 435 605" className="size-full" fontFamily="Lato, sans-serif" fill="#fff">
        <defs>
            <linearGradient id="flow" x1="0" y1="0" x2="0" y2="1">
                <stop offset="0" stopColor="#28906e" /><stop offset=".45" stopColor="#289074" /><stop offset=".62" stopColor="#289080" /><stop offset=".74" stopColor="#289092" />
                <stop offset=".82" stopColor="#289090" /><stop offset=".9" stopColor="#289074" /><stop offset="1" stopColor="#289060" />
            </linearGradient>
            <radialGradient id="nose"><stop offset="0" stopColor="#289052" /><stop offset="1" stopColor="#289052" stopOpacity="0" /></radialGradient>
            <linearGradient id="body" x1="0" y1="0" x2="0" y2="1">
                <stop offset="0" stopColor="#1f9690" /><stop offset=".1" stopColor="#18a0a4" /><stop offset=".24" stopColor="#16a4ae" /><stop offset=".32" stopColor="#187cac" /><stop offset=".7" stopColor="#1868a4" />
                <stop offset=".84" stopColor="#187090" /><stop offset=".9" stopColor="#20a060" /><stop offset=".96" stopColor="#5a9030" /><stop offset="1" stopColor="#8c5030" />
            </linearGradient>
            <linearGradient id="edge"><stop offset="0" stopColor="#104c70" stopOpacity=".65" /><stop offset=".15" stopColor="#104c70" stopOpacity="0" /><stop offset=".85" stopColor="#104c70" stopOpacity="0" /><stop offset="1" stopColor="#104c70" stopOpacity=".65" /></linearGradient>
            <linearGradient id="bar" x1="0" y1="0" x2="0" y2="1">
                <stop offset="0" stopColor="#f00" /><stop offset=".25" stopColor="#ff0" /><stop offset=".5" stopColor="#0f0" /><stop offset=".75" stopColor="#0ff" /><stop offset=".97" stopColor="#00f" />
            </linearGradient>
            <clipPath id="domain"><rect x="142" y="11" width="151" height="583" /></clipPath>
            <clipPath id="shell"><path d="M192 461q0-6 4-8h43q4 2 4 8v53q0 18-15 26-11 5-21 0-15-8-15-26z" /></clipPath>
        </defs>
        <rect x="142" y="11" width="151" height="583" fill="url(#flow)" />
        <g clipPath="url(#domain)"><ellipse cx="217" cy="590" rx="95" ry="60" fill="url(#nose)" /></g>
        <Dots dots={disc(7, 260, 217, 452, 14, 56, ["#2c7cc0", "#2c6cb4", "#28a0a0", "#2888a8"])} opacity={0.75} />
        <Dots dots={disc(19, 80, 217, 458, 50, 74, ["#2c7cc0", "#28b0a0"])} opacity={0.6} />
        <g clipPath="url(#shell)">
            <rect x="192" y="453" width="51" height="90" fill="url(#body)" />
            <Dots dots={grid(3, 600, 197, 480, 42, 36, ["#1858a8", "#1850b0", "#187898"])} opacity={0.5} />
            <Dots dots={grid(4, 450, 192, 514, 51, 14, ["#14507c", "#188098"])} opacity={0.5} />
            <Dots dots={grid(5, 250, 192, 453, 51, 22, ["#18b0a0", "#148098"])} opacity={0.4} />
            <Dots dots={grid(6, 150, 200, 529, 36, 14, ["#28b040", "#7c9020", "#9c4038"])} opacity={0.6} />
            <rect x="192" y="453" width="51" height="90" fill="url(#edge)" />
        </g>
        <path d="M193 443h49l-3 6v5h-43v-5z" fill="#1e8094" />
        <path d="M192 442h51v2h-51zM192 450h51v3h-51z" fill="#1c5c9c" />
        <path d="M210 451h14v2h-14zM200 445h8v1h-8zM226 445h8v1h-8z" fill="#189c98" />
        <Dots dots={grid(9, 80, 195, 453, 45, 3, ["#28a040", "#208070"])} />

        <rect x="280" y="43" width="16" height="270" fill="url(#bar)" />
        <path d="M270 43.500h8" stroke="#c02828" /><path d="M270 313.500h8" stroke="#0000c0" />
        <g stroke="#d0d0cc">
            {TICKS.map((k) => {
                const y = Math.round(304 - 8.7 * k) + 0.5;
                return <path key={k} d={`M${k % 10 === 0 && k < 30 ? 289 : 294} ${y}h${k % 10 === 0 && k < 30 ? 14 : 9}`} />;
            })}
        </g>
        <g fontSize="17" fontWeight="300">
            <text x="430" y="29" textAnchor="end">Pressure, p_rgh (Pa)</text>
            <text x="267" y="49" textAnchor="end">3e+05</text>
            <text x="267" y="319" textAnchor="end">-1e+04</text>
            <text x="305" y="136">2e+5</text>
            <text x="305" y="223">1e+5</text>
            <text x="305" y="310">0</text>
        </g>
        <path d="M75.500 492v37" stroke="#10e020" /><path d="M75 529.500h38" stroke="#e01010" />
        <path d="M73 497h6v-3l-3-3-3 3z" fill="#00b400" /><path d="M73 497h6v1.500h-6z" fill="#000" />
        <path d="M109 526.500v6l7-3z" fill="#e01010" stroke="#300" strokeWidth=".6" />
        <path d="M73 527h5v5h-5z" fill="#ff0" />
        <g fontSize="11" fontFamily="'Liberation Sans', sans-serif">
            <text x="77" y="496">Z</text><text x="76" y="530">Y</text><text x="111" y="530">X</text>
        </g>
    </svg>
);

const NoseView = () => (
    <svg viewBox="0 0 435 289" className="size-full">
        <defs>
            <radialGradient id="wash1" r=".62"><stop offset="0" stopColor="#289050" /><stop offset=".4" stopColor="#289052" /><stop offset=".85" stopColor="#289064" /><stop offset="1" stopColor="#289068" /></radialGradient>
            <radialGradient id="cap1" cy=".52">
                <stop offset="0" stopColor="#3c8450" /><stop offset=".22" stopColor="#4c7844" /><stop offset=".3" stopColor="#6c6434" /><stop offset=".42" stopColor="#5c8838" />
                <stop offset=".6" stopColor="#289048" /><stop offset=".78" stopColor="#18906c" /><stop offset=".88" stopColor="#187474" /><stop offset="1" stopColor="#186870" />
            </radialGradient>
        </defs>
        <rect x="96" y="23" width="243" height="243" fill="url(#wash1)" />
        <circle cx="217.500" cy="144.500" r="40.500" fill="url(#cap1)" />
        <Dots dots={disc(21, 600, 217, 144, 33, 40, ["#186880", "#14587c", "#187c68"])} opacity={0.5} />
        <Dots dots={disc(22, 800, 217, 142, 18, 33, ["#18a050", "#2c9c30", "#108c60", "#20b038"])} opacity={0.55} />
        <Dots dots={disc(23, 500, 217, 143, 13, 25, ["#6c8c34", "#5c9c30", "#8c8034"])} opacity={0.5} />
        <Dots dots={disc(24, 200, 217, 144, 10, 14, ["#843c2c", "#6c5034"])} opacity={0.5} />
        <path d="M35.500 236v17" stroke="#f0e000" /><path d="M18 253.500h17" stroke="#e01010" />
        <path d="M17 252h3v3h-3z" fill="#e01010" /><path d="M35 252h2v2h-2z" fill="#20c020" />
        <g fill="#fff" fontSize="6" fontFamily="'Liberation Sans', sans-serif">
            <text x="37" y="238">Y</text><text x="37" y="253">Z</text><text x="20" y="253">X</text>
        </g>
    </svg>
);

const TailView = () => (
    <svg viewBox="0 0 435 289" className="size-full">
        <defs>
            <radialGradient id="wash2" r=".62"><stop offset="0" stopColor="#289050" /><stop offset=".3" stopColor="#289052" /><stop offset=".7" stopColor="#289064" /><stop offset="1" stopColor="#289068" /></radialGradient>
            <radialGradient id="cap2">
                <stop offset="0" stopColor="#388460" /><stop offset=".2" stopColor="#40806c" /><stop offset=".3" stopColor="#507468" /><stop offset=".42" stopColor="#388c68" />
                <stop offset=".55" stopColor="#208c6c" /><stop offset=".75" stopColor="#188480" /><stop offset=".88" stopColor="#186c94" /><stop offset="1" stopColor="#187098" />
            </radialGradient>
        </defs>
        <rect x="94" y="21" width="247" height="247" fill="url(#wash2)" />
        <circle cx="217.500" cy="144.500" r="41" fill="url(#cap2)" />
        <circle cx="217.500" cy="144.500" r="22.500" fill="none" stroke="#1c6c9c" strokeDasharray="4 1.500" strokeWidth="1.200" />
        <circle cx="217.500" cy="144.500" r="19" fill="none" stroke="#6c9468" strokeDasharray="3 1" strokeWidth="1.200" />
        <circle cx="217.500" cy="144.500" r="39" fill="none" stroke="#188c9c" strokeWidth="1.500" opacity=".7" />
        <Dots dots={disc(31, 900, 217, 144, 30, 41, ["#186cac", "#145c98", "#188c90"])} opacity={0.5} />
        <Dots dots={disc(32, 400, 217, 144, 12, 21, ["#6c8c6c", "#4c8470", "#7c7468"])} opacity={0.55} />
        <Dots dots={disc(33, 220, 217, 144, 9, 14, ["#705c64", "#5c6c6c"])} opacity={0.6} />
        <path d="M35.500 235v18" stroke="#f0e000" /><path d="M36 253.500h18" stroke="#e01010" />
        <path d="M34 252h3v3h-3z" fill="#1c5c1c" /><path d="M52 252h3v3h-3z" fill="#e01010" />
        <g fill="#fff" fontSize="6" fontFamily="'Liberation Sans', sans-serif">
            <text x="37" y="238">Y</text><text x="37" y="253">Z</text><text x="52" y="253">X</text>
        </g>
    </svg>
);

const Workspace = () => (
    <main className="flex min-w-0 flex-1 flex-col pt-[2px]">
        <div role="tablist" className="flex h-[21px] shrink-0 items-end">
            <button role="tab" aria-selected="true" className="flex h-[21px] w-[100px] items-center justify-center gap-1 rounded-t-[3px] border border-b-0 border-[#868686] bg-[#efefef]">
                Layout #1
                <svg viewBox="0 0 8 8" className="size-2" stroke="#000" strokeWidth="1.500"><path d="M0 0l8 8M8 0 0 8" /></svg>
            </button>
            <button role="tab" aria-selected="false" aria-label="New layout" className="flex h-[19px] w-[34px] items-center justify-center rounded-tr-[3px] border border-l-0 border-[#868686] bg-linear-to-b from-[#dcdce1] to-[#c8c9cf]">+</button>
            <div className="flex-1 border-b border-[#868686]" />
        </div>
        <div className="flex min-h-0 flex-1 border border-t-0 border-[#868686] p-px">
            <ViewFrame active><BulletView /></ViewFrame>
            <div className="flex w-[3px] items-center"><SplitDots vertical className="h-[200px]" /></div>
            <div className="flex min-w-0 flex-1 flex-col">
                <ViewFrame><NoseView /></ViewFrame>
                <div className="flex h-[3px] justify-center"><SplitDots className="w-[144px]" /></div>
                <ViewFrame><TailView /></ViewFrame>
            </div>
        </div>
    </main>
);

const App = () => (
    <div className="flex h-screen min-h-[600px] flex-col overflow-hidden bg-[#efefef] font-['DejaVu_Sans',sans-serif] text-[12px] leading-4 text-black">
        <Gradients />
        <header className="shrink-0 bg-[#1c2c54]">
            <div className="flex h-7 items-center gap-[3px] rounded-tl-[6px] bg-linear-to-b from-[#5b584f] to-[#3d3c38] pt-px pl-[7px]">
                {["M5.500 5.500l5 5M10.500 5.500l-5 5", "M5 8h6", "M5 5h6v6H5z"].map((d, i) => (
                    <button key={d} type="button" aria-label={["Close", "Minimize", "Maximize"][i]} className="size-4">
                        <svg viewBox="0 0 16 16" fill="none" stroke="#35332e" strokeWidth="1.200">
                            <circle cx="8" cy="8" r="7.300" fill={i === 0 ? "#ee5a2e" : "#75736c"} />
                            <path d={d} />
                        </svg>
                    </button>
                ))}
                <h1 className="pl-2 font-['Open_Sans',sans-serif] text-[14px] font-bold text-[#dfdbd2]">ParaView 4.1.0 64-bit</h1>
            </div>
        </header>
        <Toolbars />
        <div className="flex min-h-0 flex-1">
            <LeftDock />
            <div className="flex w-[6px] shrink-0 items-center justify-center"><SplitDots vertical className="h-[210px]" /></div>
            <Workspace />
        </div>
        <footer className="flex h-7 shrink-0 items-center justify-end">
            <div className="flex h-[25px] w-[617px] rounded-[2px] border border-[#868686] p-px">
                <button type="button" aria-label="Abort" className="flex w-[22px] items-center justify-center rounded-[3px] border-2 border-[#929292] bg-[#f4f4f4]">
                    <svg viewBox="0 0 10 10" className="size-2" stroke="#a8a8a8" strokeWidth="3"><path d="M1 1l8 8M9 1 1 9" /></svg>
                </button>
                <div role="progressbar" aria-label="Progress" className="mr-[3px] flex-1 rounded-[3px] border-2 border-[#929292]" />
            </div>
            <svg viewBox="0 0 12 12" className="ml-3 size-3 self-end" stroke="#555" strokeWidth="1.200"><path d="M0 12 12 0M4 12l8-8M8 12l4-4" /></svg>
        </footer>
    </div>
);

export default App;
